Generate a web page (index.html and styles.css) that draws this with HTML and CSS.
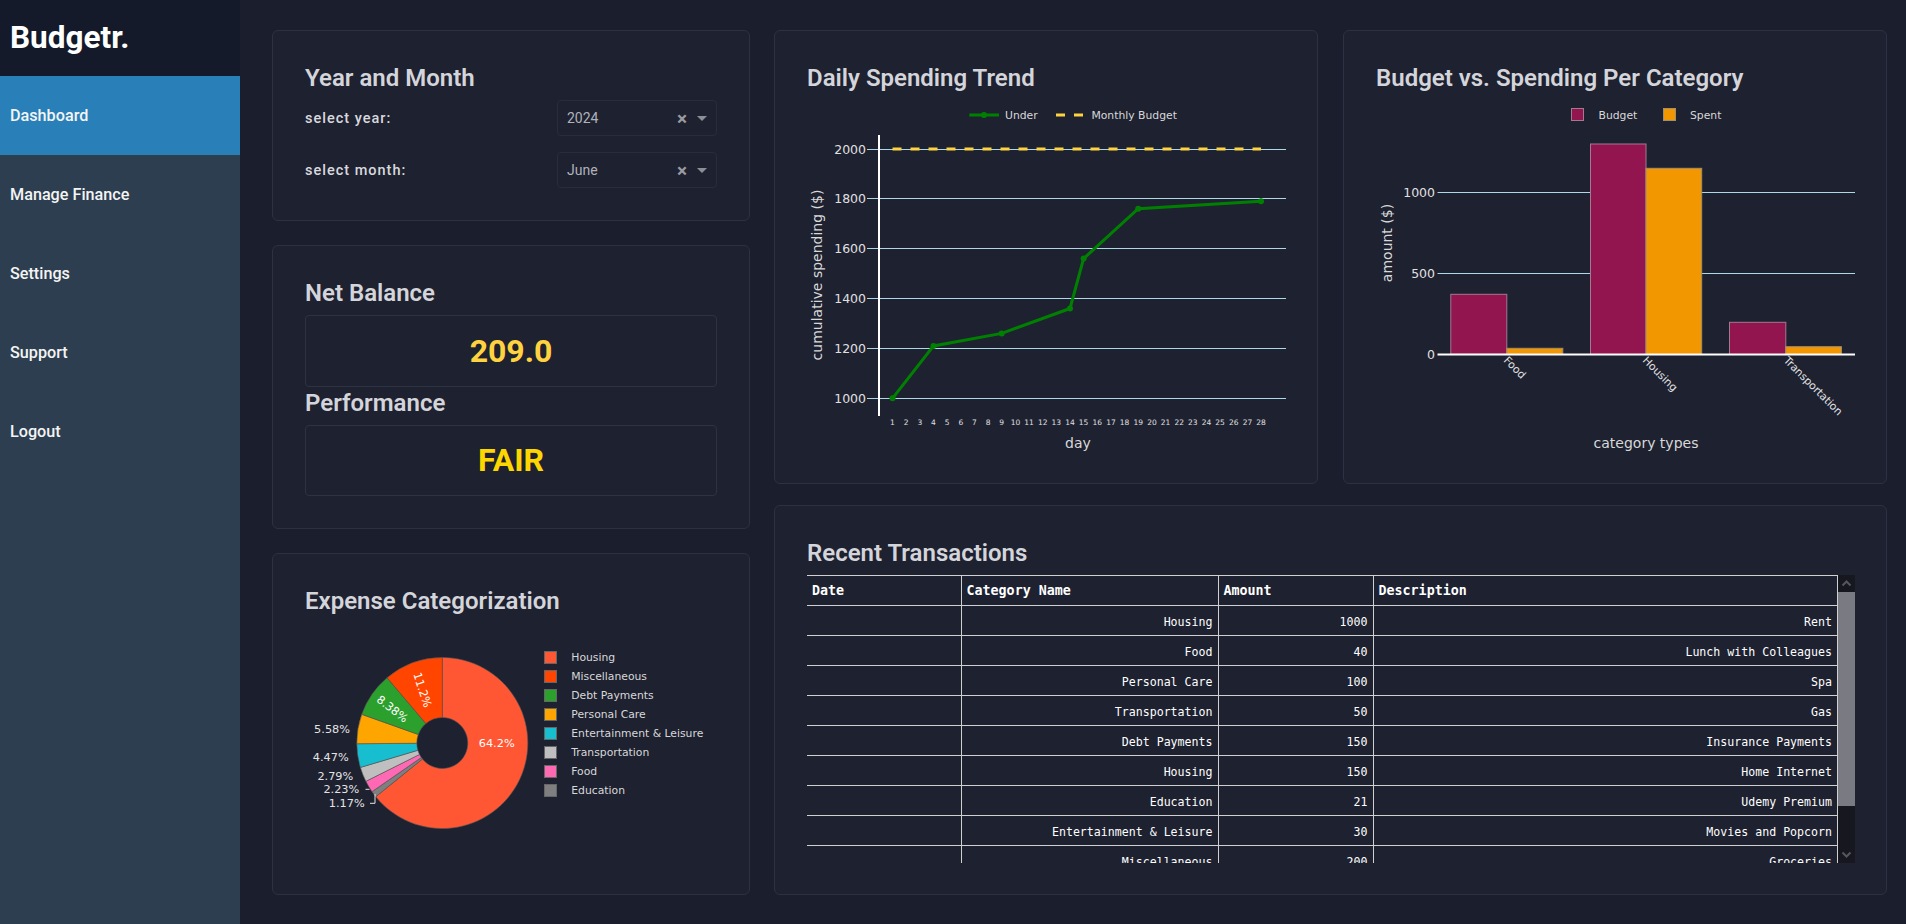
FILE: index.html
```html
<!DOCTYPE html>
<html lang="en">
<head>
<meta charset="utf-8">
<title>Budgetr.</title>
<link rel="stylesheet" href="styles.css">
</head>
<body>
<div class="app">
  <aside class="sidebar">
    <div class="brand">Budgetr.</div>
    <nav class="nav">
      <a class="nav-item active">Dashboard</a>
      <a class="nav-item">Manage Finance</a>
      <a class="nav-item">Settings</a>
      <a class="nav-item">Support</a>
      <a class="nav-item">Logout</a>
    </nav>
  </aside>
  <main class="main">
    <div class="col-left">
      <section class="card card-year">
        <h2 class="title">Year and Month</h2>
        <div class="field">
          <label class="field-label">select year:</label>
          <div class="select"><span class="select-value">2024</span><span class="select-x">×</span><span class="caret"></span></div>
        </div>
        <div class="field">
          <label class="field-label">select month:</label>
          <div class="select"><span class="select-value">June</span><span class="select-x">×</span><span class="caret"></span></div>
        </div>
      </section>
      <section class="card card-net">
        <h2 class="title">Net Balance</h2>
        <div class="stat stat-net">209.0</div>
        <h2 class="title">Performance</h2>
        <div class="stat stat-fair">FAIR</div>
      </section>
      <section class="card card-pie">
        <h2 class="title">Expense Categorization</h2>
        <svg class="chart chart-pie" viewBox="305 623 412 238" width="412" height="238">
          <g transform="translate(442.3 743)" stroke="#555" stroke-width=".6">
            <path fill="#ff5733" d="M0 -85.5A85.5 85.5 0 1 1 -66.54 53.69L-19.85 16.01A25.5 25.5 0 1 0 0 -25.5Z"/>
            <path fill="#7f7f7f" d="M-66.54 53.69A85.5 85.5 0 0 1 -70.32 48.63L-20.97 14.5A25.5 25.5 0 0 0 -19.85 16.01Z"/>
            <path fill="#ff69b4" d="M-70.32 48.63A85.5 85.5 0 0 1 -76.43 38.34L-22.79 11.43A25.5 25.5 0 0 0 -20.97 14.5Z"/>
            <path fill="#bfbfbf" d="M-76.43 38.34A85.5 85.5 0 0 1 -81.93 24.43L-24.44 7.29A25.5 25.5 0 0 0 -22.79 11.43Z"/>
            <path fill="#17becf" d="M-81.93 24.43A85.5 85.5 0 0 1 -85.5 .74L-25.5 .22A25.5 25.5 0 0 0 -24.44 7.29Z"/>
            <path fill="#ffa500" d="M-85.5 .74A85.5 85.5 0 0 1 -80.56 -28.65L-24.03 -8.55A25.5 25.5 0 0 0 -25.5 .22Z"/>
            <path fill="#2ca02c" d="M-80.56 -28.65A85.5 85.5 0 0 1 -55.24 -65.25L-16.48 -19.46A25.5 25.5 0 0 0 -24.03 -8.55Z"/>
            <path fill="#ff4500" d="M-55.24 -65.25A85.5 85.5 0 0 1 0 -85.5L0 -25.5A25.5 25.5 0 0 0 -16.48 -19.46Z"/>
          </g>
          <g class="pie-label">
            <text x="496.7" y="747.2" text-anchor="middle">64.2%</text>
            <text text-anchor="middle" transform="translate(422.3 690) rotate(72) translate(0 3.8)">11.2%</text>
            <text text-anchor="middle" transform="translate(392.3 709) rotate(38) translate(0 3.8)">8.38%</text>
            <text class="pie-out" x="350" y="733.2" text-anchor="end">5.58%</text>
            <text class="pie-out" x="348.7" y="760.6" text-anchor="end">4.47%</text>
            <text class="pie-out" x="353.3" y="779.6" text-anchor="end">2.79%</text>
            <text class="pie-out" x="359.3" y="793.2" text-anchor="end">2.23%</text>
            <text class="pie-out" x="364.7" y="807.2" text-anchor="end">1.17%</text>
          </g>
          <path class="leader" d="M365.5 789.3H369.5M370 803.3H375V794"/>
          <g class="pie-swatches" stroke="#666" stroke-width="1">
            <rect x="544.5" y="651.5" width="12" height="12" fill="#ff5733"/>
            <rect x="544.5" y="670.5" width="12" height="12" fill="#ff4500"/>
            <rect x="544.5" y="689.5" width="12" height="12" fill="#2ca02c"/>
            <rect x="544.5" y="708.5" width="12" height="12" fill="#ffa500"/>
            <rect x="544.5" y="727.5" width="12" height="12" fill="#17becf"/>
            <rect x="544.5" y="746.5" width="12" height="12" fill="#bfbfbf"/>
            <rect x="544.5" y="765.5" width="12" height="12" fill="#ff69b4"/>
            <rect x="544.5" y="784.5" width="12" height="12" fill="#7f7f7f"/>
          </g>
          <g class="legend-text">
            <text x="571.3" y="661">Housing</text>
            <text x="571.3" y="680">Miscellaneous</text>
            <text x="571.3" y="699">Debt Payments</text>
            <text x="571.3" y="718">Personal Care</text>
            <text x="571.3" y="737">Entertainment &amp; Leisure</text>
            <text x="571.3" y="756">Transportation</text>
            <text x="571.3" y="775">Food</text>
            <text x="571.3" y="794">Education</text>
          </g>
        </svg>
      </section>
    </div>
    <div class="col-right">
      <div class="row-top">
        <section class="card card-chart">
          <h2 class="title">Daily Spending Trend</h2>
          <svg class="chart" viewBox="807 100 478 350" width="478" height="350">
            <g class="grid">
              <path d="M867 149.5H1286M867 198.5H1286M867 248.5H1286M867 298.5H1286M867 348.5H1286M867 398.5H1286"/>
            </g>
            <path class="axis" d="M879 135V416"/>
            <polyline class="trend" points="892.5,398.3 933.5,345.9 1001.7,333.4 1070,308.5 1083.6,258.6 1138.2,208.7 1261,201.2"/>
            <g class="trend-dot">
              <circle cx="892.5" cy="398.3" r="3"/><circle cx="933.5" cy="345.9" r="3"/><circle cx="1001.7" cy="333.4" r="3"/><circle cx="1070" cy="308.5" r="3"/><circle cx="1083.6" cy="258.6" r="3"/><circle cx="1138.2" cy="208.7" r="3"/><circle cx="1261" cy="201.2" r="3"/>
            </g>
            <path class="budget-line" d="M892.5 149H1261"/>
            <g class="legend-text">
              <text x="1005" y="119">Under</text>
              <text x="1091.4" y="119">Monthly Budget</text>
            </g>
            <path class="trend" d="M969.3 115H999"/>
            <circle class="trend-dot" cx="984" cy="115" r="3"/>
            <path class="budget-line" d="M1056 115H1083"/>
            <g class="tick-y" text-anchor="end">
              <text x="866" y="154">2000</text><text x="866" y="203">1800</text><text x="866" y="253">1600</text><text x="866" y="303">1400</text><text x="866" y="353">1200</text><text x="866" y="403">1000</text>
            </g>
            <g class="tick-x" text-anchor="middle">
              <text x="892.5" y="424.5">1</text><text x="906.2" y="424.5">2</text><text x="919.8" y="424.5">3</text><text x="933.5" y="424.5">4</text><text x="947.1" y="424.5">5</text><text x="960.8" y="424.5">6</text><text x="974.4" y="424.5">7</text><text x="988.1" y="424.5">8</text><text x="1001.7" y="424.5">9</text><text x="1015.4" y="424.5">10</text><text x="1029" y="424.5">11</text><text x="1042.7" y="424.5">12</text><text x="1056.3" y="424.5">13</text><text x="1070" y="424.5">14</text><text x="1083.6" y="424.5">15</text><text x="1097.3" y="424.5">16</text><text x="1110.9" y="424.5">17</text><text x="1124.6" y="424.5">18</text><text x="1138.2" y="424.5">19</text><text x="1151.9" y="424.5">20</text><text x="1165.5" y="424.5">21</text><text x="1179.2" y="424.5">22</text><text x="1192.8" y="424.5">23</text><text x="1206.5" y="424.5">24</text><text x="1220.1" y="424.5">25</text><text x="1233.8" y="424.5">26</text><text x="1247.4" y="424.5">27</text><text x="1261" y="424.5">28</text>
            </g>
            <text class="axis-title" x="1078" y="448" text-anchor="middle">day</text>
            <text class="axis-title" text-anchor="middle" transform="translate(822 275) rotate(-90)">cumulative spending ($)</text>
          </svg>
        </section>
        <section class="card card-chart">
          <h2 class="title">Budget vs. Spending Per Category</h2>
          <svg class="chart" viewBox="1376 100 478 350" width="478" height="350">
            <g class="grid">
              <path d="M1437.5 192.5H1855M1437.5 273.5H1855"/>
            </g>
            <g class="bars">
              <rect class="bar-budget" x="1450.8" y="294.3" width="56" height="60"/>
              <rect class="bar-spent" x="1506.8" y="348.3" width="56" height="6"/>
              <rect class="bar-budget" x="1590.5" y="144" width="55.5" height="210.5"/>
              <rect class="bar-spent" x="1646" y="168.3" width="55.7" height="186.2"/>
              <rect class="bar-budget" x="1729.5" y="322.3" width="56.3" height="32.2"/>
              <rect class="bar-spent" x="1785.8" y="346.7" width="55.6" height="7.8"/>
            </g>
            <path class="axis" d="M1437.5 354.5H1855"/>
            <rect class="bar-budget" x="1571.5" y="108.5" width="12" height="12"/>
            <rect class="bar-spent" x="1663.5" y="108.5" width="12" height="12"/>
            <g class="legend-text">
              <text x="1598.5" y="118.5">Budget</text>
              <text x="1690" y="118.5">Spent</text>
            </g>
            <g class="tick-y" text-anchor="end">
              <text x="1435" y="197">1000</text><text x="1435" y="278">500</text><text x="1435" y="359">0</text>
            </g>
            <g class="tick-cat">
              <text transform="translate(1503 361) rotate(45)">Food</text>
              <text transform="translate(1642 361) rotate(45)">Housing</text>
              <text transform="translate(1783 361) rotate(45)">Transportation</text>
            </g>
            <text class="axis-title" x="1646" y="448" text-anchor="middle">category types</text>
            <text class="axis-title" text-anchor="middle" transform="translate(1392 243) rotate(-90)">amount ($)</text>
          </svg>
        </section>
      </div>
      <section class="card card-table">
        <h2 class="title">Recent Transactions</h2>
        <div class="table-wrap">
          <div class="table-clip">
            <table class="tx">
              <colgroup><col class="c-date"><col class="c-cat"><col class="c-amt"><col class="c-desc"></colgroup>
              <thead><tr><th>Date</th><th>Category Name</th><th>Amount</th><th>Description</th></tr></thead>
              <tbody>
                <tr><td></td><td>Housing</td><td>1000</td><td>Rent</td></tr>
                <tr><td></td><td>Food</td><td>40</td><td>Lunch with Colleagues</td></tr>
                <tr><td></td><td>Personal Care</td><td>100</td><td>Spa</td></tr>
                <tr><td></td><td>Transportation</td><td>50</td><td>Gas</td></tr>
                <tr><td></td><td>Debt Payments</td><td>150</td><td>Insurance Payments</td></tr>
                <tr><td></td><td>Housing</td><td>150</td><td>Home Internet</td></tr>
                <tr><td></td><td>Education</td><td>21</td><td>Udemy Premium</td></tr>
                <tr><td></td><td>Entertainment &amp; Leisure</td><td>30</td><td>Movies and Popcorn</td></tr>
                <tr><td></td><td>Miscellaneous</td><td>200</td><td>Groceries</td></tr>
              </tbody>
            </table>
          </div>
          <div class="scrollbar">
            <svg class="sb-btn" viewBox="0 0 17 17" width="17" height="17"><path d="M4.5 10.5L8.5 6.5L12.5 10.5" /></svg>
            <div class="sb-track"><div class="sb-thumb"></div></div>
            <svg class="sb-btn" viewBox="0 0 17 17" width="17" height="17"><path d="M4.5 6.5L8.5 10.5L12.5 6.5" /></svg>
          </div>
        </div>
      </section>
    </div>
  </main>
</div>
</body>
</html>
```

FILE: styles.css
```css
* { box-sizing: border-box; }
html, body { margin: 0; padding: 0; height: 100%; }
body { background: #1b1e2d; font-family: Roboto, "Liberation Sans", sans-serif; color: #fff; overflow: hidden; }
.app { display: flex; height: 924px; }

.sidebar { width: 240px; flex: none; background: #2c3e50; }
.brand { height: 76px; padding: 0 10px; background: #141a2a; font-size: 31.5px; font-weight: 700; line-height: 76px; color: #fff; }
.nav { display: flex; flex-direction: column; }
.nav-item { display: block; height: 79px; padding: 0 10px; line-height: 80px; font-size: 16.2px; font-weight: 500; color: #f4f4f4; }
.nav-item.active { background: #2980b9; }

.main { flex: 1; display: flex; gap: 24px; padding: 30px 19px 29px 32px; min-width: 0; }
.col-left { width: 478px; flex: none; display: flex; flex-direction: column; gap: 24px; }
.col-right { flex: 1; display: flex; flex-direction: column; gap: 21px; min-width: 0; }
.row-top { display: flex; gap: 25px; }

.card { background: #1e2130; border: 1px solid #2d3142; border-radius: 6px; padding: 31px 32px 32px; }
.card-year { height: 191px; }
.card-net { height: 284px; }
.card-pie { height: 342px; }
.card-chart { flex: 1; height: 454px; padding-bottom: 0; }
.card-table { height: 390px; padding-bottom: 0; }

.title { margin: 0 0 6px; font-size: 24px; font-weight: 600; line-height: 32px; color: #d4d5da; }

.field { display: flex; align-items: center; justify-content: space-between; height: 36px; margin-bottom: 16px; }
.field-label { font-size: 14.5px; font-weight: 500; letter-spacing: 1px; color: #d8d9de; }
.select { width: 160px; height: 36px; display: flex; align-items: center; padding: 0 9px; background: #1e2130; border: 1px solid #282c3c; border-radius: 4px; }
.select-value { flex: 1; font-size: 14px; color: #b0b2ba; }
.select-x { width: 10px; margin-right: 10px; font-size: 19px; line-height: 19px; font-weight: 700; color: #9a9ba0; text-align: center; }
.caret { width: 0; height: 0; border-left: 5px solid transparent; border-right: 5px solid transparent; border-top: 5px solid #8d8f96; }

.stat { height: 71.5px; display: flex; align-items: center; justify-content: center; border: 1px solid #2e3242; border-radius: 4px; font-size: 32px; font-weight: 700; }
.stat-net { color: #ffd23f; }
.stat-fair { color: #ffd700; }

.chart { display: block; overflow: visible; font-family: "DejaVu Sans", Verdana, sans-serif; }
.grid path { stroke: #add8e6; stroke-width: 1; fill: none; }
.axis { stroke: #fff; stroke-width: 2; fill: none; }
.trend { fill: none; stroke: #008000; stroke-width: 3; }
.trend-dot { fill: #008000; }
.budget-line { fill: none; stroke: #ffd23f; stroke-width: 3; stroke-dasharray: 9 9; }
.legend-text text { font-size: 10.8px; fill: #d8d8d8; }
.tick-y text { font-size: 12.5px; fill: #e0e0e0; }
.tick-x text { font-size: 7.5px; fill: #e0e0e0; }
.tick-cat text { font-size: 10.8px; fill: #e0e0e0; }
.axis-title { font-size: 14px; fill: #d8d8d8; }
.bar-budget { fill: #92154f; stroke: #a07a90; stroke-width: 1; }
.bar-spent { fill: #f39700; stroke: #a09070; stroke-width: 1; }
.pie-label text { font-size: 11.3px; fill: #fff; }
.pie-label .pie-out { fill: #e4e4e4; }
.leader { fill: none; stroke: #e4e4e4; stroke-width: 1; }

.table-wrap { display: flex; height: 288px; width: 1048px; }
.table-clip { width: 1031px; height: 288px; overflow: hidden; }
.tx { width: 1031px; table-layout: fixed; border-collapse: collapse; font-family: "DejaVu Sans Mono", "Liberation Mono", monospace; color: #fff; border-top: 1px solid #d0d0d0; border-right: 1px solid #d0d0d0; }
.c-date { width: 154px; }
.c-cat { width: 257px; }
.c-amt { width: 155px; }
.tx th, .tx td { height: 30px; padding: 0 5px; border-bottom: 1px solid #d0d0d0; border-left: 1px solid #d0d0d0; overflow: hidden; white-space: nowrap; }
.tx th:first-child, .tx td:first-child { border-left: none; }
.tx th { font-size: 13.33px; font-weight: 700; text-align: left; }
.tx td { padding-top: 2px; font-size: 11.6px; font-weight: 400; text-align: right; }
.scrollbar { width: 17px; height: 288px; flex: none; display: flex; flex-direction: column; background: #17171f; }
.sb-btn { display: block; flex: none; }
.sb-btn path { fill: none; stroke: #55565e; stroke-width: 2; }
.sb-track { flex: 1; }
.sb-thumb { height: 214px; background: #7a7a82; }
```
